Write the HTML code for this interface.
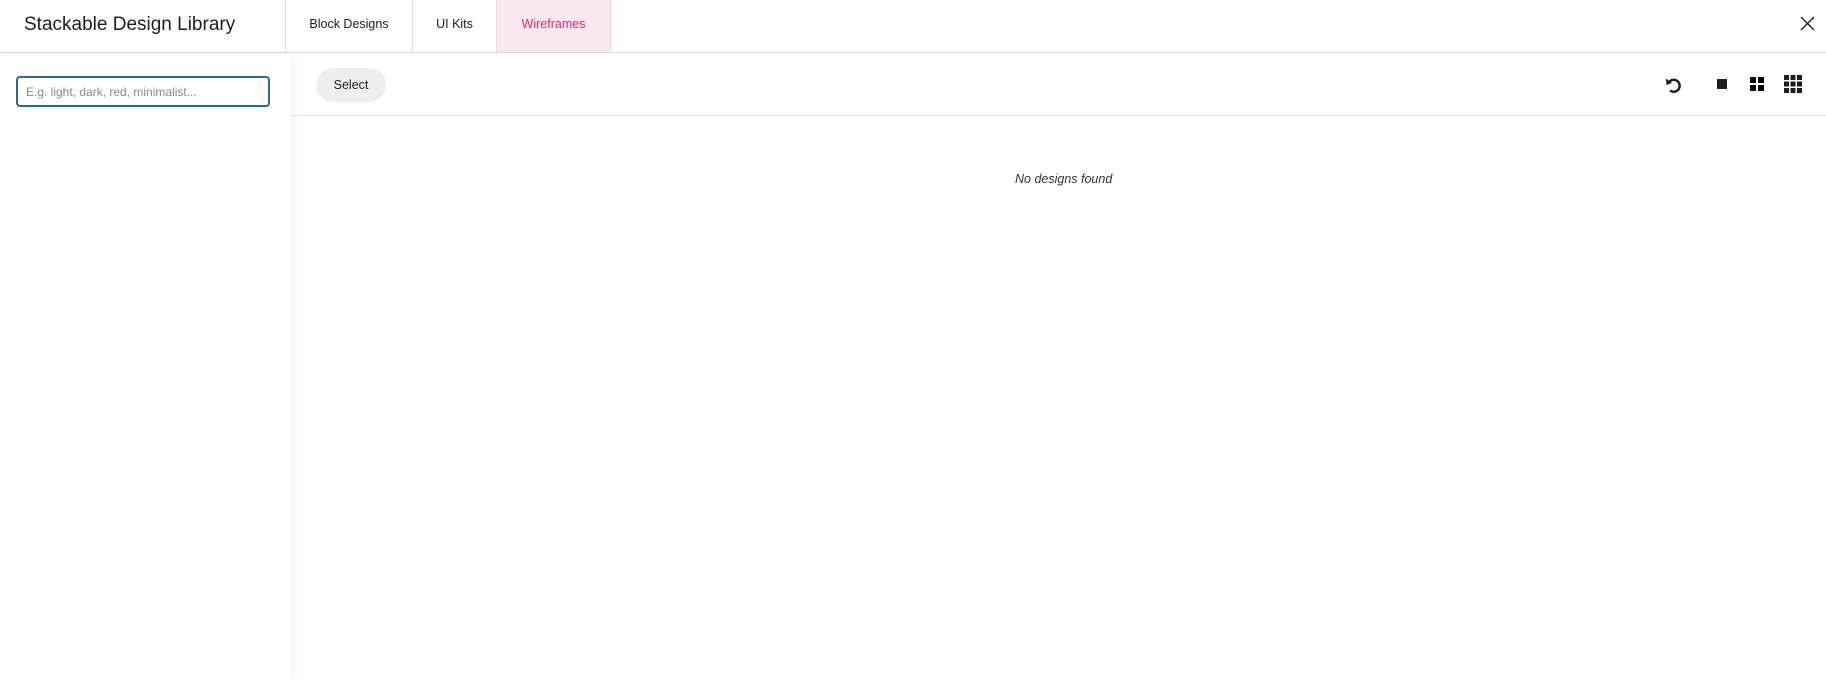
<!DOCTYPE html>
<html><head><meta charset="utf-8"><style>
*{box-sizing:border-box;margin:0;padding:0}
body{width:1826px;height:680px;background:#fff;font-family:"Liberation Sans",sans-serif;color:#1e1e1e;position:relative;overflow:hidden}
.hdr{position:absolute;left:0;top:0;width:1826px;height:53px;border-bottom:1px solid #ddd}
.title{position:absolute;left:24px;top:14px;font-size:19px;color:#1e1e1e}
.tab{position:absolute;top:0;height:52px;line-height:49px;font-size:12.5px;text-align:center;border-left:1px solid #ddd}
.side{position:absolute;left:0;top:53px;width:291px;height:627px;background:#fff;z-index:2;box-shadow:2px 0 8px rgba(0,0,0,0.06)}
.inp{position:absolute;left:16px;top:23px;width:254px;height:31px;border:2px solid #2c6a96;border-radius:4px;font-size:12px;color:#888;padding:7px 8px}
.tb{position:absolute;left:291px;top:53px;width:1535px;height:63px;border-bottom:1px solid #e8e8e8}
.sel{position:absolute;left:25px;top:15px;width:70px;height:34px;border-radius:17px;background:#eee;font-size:12.5px;text-align:center;line-height:34px}
.nd{position:absolute;left:1015px;top:172px;font-size:12.5px;font-style:italic;color:#333}
</style></head><body>
<div class="hdr">
<div class="title">Stackable Design Library</div>
<div class="tab" style="left:285px;width:127px">Block Designs</div>
<div class="tab" style="left:412px;width:84px">UI Kits</div>
<div class="tab" style="left:496px;width:115px;background:#fbe8ef;color:#d6287b;border-right:1px solid #ddd">Wireframes</div>
<svg style="position:absolute;left:1800px;top:16px" width="15" height="15" viewBox="0 0 15 15"><path d="M1 1L14 14M14 1L1 14" stroke="#1e1e1e" stroke-width="1.4"/></svg>
</div>
<div class="side"><div class="inp">E.g. light, dark, red, minimalist...</div></div>
<div class="tb">
<svg style="position:absolute;left:1373px;top:22px" width="20" height="20" viewBox="0 0 20 20"><path d="M5 7A6 6 0 1 1 6 15.5" fill="none" stroke="#1e1e1e" stroke-width="2.4"/><path d="M2 3.5L2.5 10L8 8Z" fill="#1e1e1e"/></svg>
<div class="sel">Select</div>
<div style="position:absolute;left:1426px;top:26px;width:10px;height:10px;background:#1e1e1e"></div>
<svg style="position:absolute;left:1459px;top:24px" width="14" height="14"><rect x="0" y="0" width="6" height="6"/><rect x="8" y="0" width="6" height="6"/><rect x="0" y="8" width="6" height="6"/><rect x="8" y="8" width="6" height="6"/></svg>
<svg style="position:absolute;left:1493px;top:22px" width="18" height="18"><g fill="#1e1e1e"><rect x="0" y="0" width="5" height="5"/><rect x="6.5" y="0" width="5" height="5"/><rect x="13" y="0" width="5" height="5"/><rect x="0" y="6.5" width="5" height="5"/><rect x="6.5" y="6.5" width="5" height="5"/><rect x="13" y="6.5" width="5" height="5"/><rect x="0" y="13" width="5" height="5"/><rect x="6.5" y="13" width="5" height="5"/><rect x="13" y="13" width="5" height="5"/></g></svg>
</div>
<div class="nd">No designs found</div>
</body></html>
